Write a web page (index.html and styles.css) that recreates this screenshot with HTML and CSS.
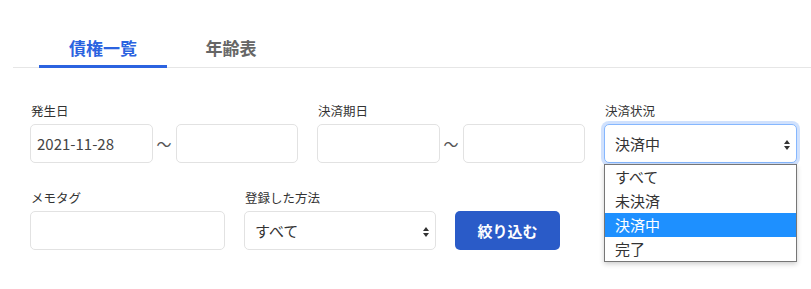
FILE: index.html
```html
<!DOCTYPE html>
<html>
<head>
    <title>債権一覧</title>
    <link rel="stylesheet" href="styles.css">
</head>
<body>
    <div class="tabs">
        <div class="tab active">債権一覧</div>
        <div class="tab">年齢表</div>
    </div>

    <div class="filter">
        <div class="filter-row">
            <div class="form-group group-range">
                <label class="form-label">発生日</label>
                <div class="range">
                    <input type="text" class="form-input" value="2021-11-28">
                    <span class="tilde">～</span>
                    <input type="text" class="form-input">
                </div>
            </div>
            <div class="form-group group-range">
                <label class="form-label">決済期日</label>
                <div class="range">
                    <input type="text" class="form-input">
                    <span class="tilde">～</span>
                    <input type="text" class="form-input">
                </div>
            </div>
            <div class="form-group group-status">
                <label class="form-label">決済状況</label>
                <div class="select-wrap">
                    <div class="form-select focused">決済中</div>
                    <ul class="dropdown">
                        <li>すべて</li>
                        <li>未決済</li>
                        <li class="selected">決済中</li>
                        <li>完了</li>
                    </ul>
                </div>
            </div>
        </div>

        <div class="filter-row">
            <div class="form-group group-memo">
                <label class="form-label">メモタグ</label>
                <input type="text" class="form-input">
            </div>
            <div class="form-group group-method">
                <label class="form-label">登録した方法</label>
                <div class="form-select">すべて</div>
            </div>
            <button class="btn">絞り込む</button>
        </div>
    </div>
</body>
</html>
```

FILE: styles.css
```css
body {
    margin: 0;
    font-family: "Noto Sans CJK JP", "Noto Sans", sans-serif;
    color: #333;
    background: white;
}

.tabs {
    display: flex;
    margin: 29px 0 0 13px;
    padding-left: 26px;
    border-bottom: 1px solid #e6e6e6;
}

.tab {
    width: 128px;
    height: 37px;
    line-height: 37px;
    text-align: center;
    font-size: 17px;
    font-weight: bold;
    color: #666;
    box-sizing: border-box;
}

.tab.active {
    color: #2b63e0;
    border-bottom: 3px solid #2b63e0;
    margin-bottom: -1px;
    height: 39px;
}

.filter {
    padding: 34px 0 0 30px;
}

.filter-row {
    display: flex;
    align-items: flex-end;
    gap: 19px;
    margin-bottom: 26px;
}

.form-group {
    display: flex;
    flex-direction: column;
}

.form-label {
    font-size: 12.5px;
    line-height: 18px;
    margin: 0 0 4px 1px;
    color: #333;
}

.group-range {
    width: 268px;
}

.group-status {
    width: 193px;
}

.group-memo {
    width: 195px;
}

.group-method {
    width: 192px;
}

.range {
    display: flex;
    align-items: center;
}

.tilde {
    width: 23px;
    text-align: center;
    font-size: 15px;
    color: #555;
}

.form-input, .form-select {
    box-sizing: border-box;
    height: 39px;
    border: 1px solid #e2e2e2;
    border-radius: 5px;
    font-family: inherit;
    font-size: 15px;
    color: #444;
    background: white;
    padding: 0 6px;
    outline: none;
}

.range .form-input {
    flex: 1;
    width: 0;
}

.form-select {
    position: relative;
    line-height: 37px;
    padding-left: 10px;
    color: #333;
}

.form-select::after {
    content: "";
    position: absolute;
    right: 6px;
    top: 15px;
    border-left: 3px solid transparent;
    border-right: 3px solid transparent;
    border-bottom: 4px solid #333;
}

.form-select::before {
    content: "";
    position: absolute;
    right: 6px;
    top: 21px;
    border-left: 3px solid transparent;
    border-right: 3px solid transparent;
    border-top: 4px solid #333;
}

.form-select.focused {
    border-color: #86b7fe;
    box-shadow: 0 0 0 3px rgba(120, 170, 250, 0.35);
}

.select-wrap {
    position: relative;
}

.dropdown {
    position: absolute;
    top: 40px;
    left: 0;
    width: 193px;
    box-sizing: border-box;
    margin: 0;
    padding: 0;
    list-style: none;
    background: white;
    border: 1px solid #767676;
    box-shadow: 0 2px 5px rgba(0, 0, 0, 0.2);
    z-index: 10;
}

.dropdown li {
    height: 24px;
    line-height: 24px;
    padding-left: 10px;
    font-size: 15px;
    color: #333;
}

.dropdown li.selected {
    background: #1e90ff;
    color: white;
}

.btn {
    width: 105px;
    height: 39px;
    border: none;
    border-radius: 5px;
    background: #2a5bc8;
    color: white;
    font-family: inherit;
    font-size: 15px;
    font-weight: bold;
    cursor: pointer;
}
```
